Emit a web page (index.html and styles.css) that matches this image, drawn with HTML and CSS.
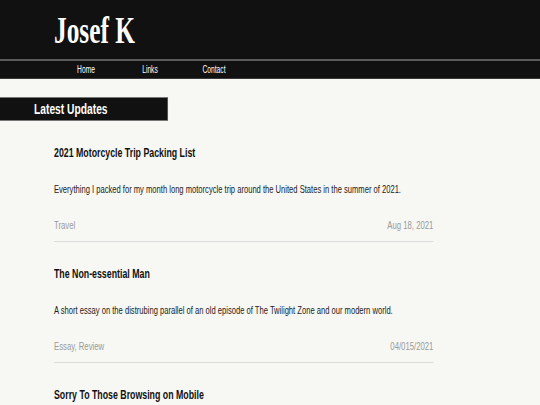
FILE: index.html
```html
<!DOCTYPE html>
<html lang="en">
<head>
<meta charset="utf-8">
<title>Josef K</title>
<link rel="stylesheet" href="styles.css">
</head>
<body>
<div class="viewport">
<div class="page">
  <header class="masthead">
    <h1 class="site-title">Josef K</h1>
  </header>
  <nav class="nav">
    <ul class="nav-list">
      <li class="nav-item"><a href="#">Home</a></li>
      <li class="nav-item"><a href="#">Links</a></li>
      <li class="nav-item"><a href="#">Contact</a></li>
    </ul>
  </nav>
  <main class="content">
    <h2 class="section-title">Latest Updates</h2>
    <div class="posts">
      <article class="post">
        <h3 class="post-title">2021 Motorcycle Trip Packing List</h3>
        <p class="post-desc">Everything I packed for my month long motorcycle trip around the United States in the summer of 2021.</p>
        <div class="post-meta"><span>Travel</span><span>Aug 18, 2021</span></div>
      </article>
      <article class="post">
        <h3 class="post-title">The Non-essential Man</h3>
        <p class="post-desc">A short essay on the distrubing parallel of an old episode of The Twilight Zone and our modern world.</p>
        <div class="post-meta"><span>Essay, Review</span><span>04/015/2021</span></div>
      </article>
      <article class="post">
        <h3 class="post-title">Sorry To Those Browsing on Mobile</h3>
      </article>
    </div>
  </main>
</div>
</div>
</body>
</html>
```
FILE: styles.css
```css
html, body {
  margin: 0;
  padding: 0;
  overflow: hidden;
  background: #f7f7f3;
}
.viewport {
  width: 540px;
  height: 405px;
  overflow: hidden;
}
.page {
  width: 810px;
  height: 405px;
  overflow: hidden;
  transform: scaleX(0.6667);
  transform-origin: 0 0;
  font-family: "Liberation Sans", Arial, sans-serif;
  background: #f7f7f3;
}
.masthead {
  background: #111111;
  height: 59px;
  padding-left: 81px;
  box-sizing: border-box;
  padding-top: 8px;
}
.site-title {
  margin: 0;
  font-family: "Liberation Serif", "Times New Roman", serif;
  font-weight: bold;
  font-size: 38px;
  line-height: 44px;
  color: #ffffff;
}
.nav {
  background: #111111;
  border-top: 2px solid #5a5a5a;
  border-bottom: 1px solid #3a3a3a;
}
.nav-list {
  list-style: none;
  margin: 0;
  padding: 0 0 0 81px;
  display: flex;
}
.nav-item {
  width: 96px;
  text-align: center;
  font-size: 10px;
  line-height: 17px;
}
.nav-item a {
  color: #ffffff;
  text-decoration: none;
}
.content {
  padding-top: 18px;
}
.section-title {
  margin: 0;
  width: 252px;
  box-sizing: border-box;
  background: #111111;
  color: #ffffff;
  font-size: 15.4px;
  font-weight: bold;
  line-height: 22px;
  padding-left: 51px;
  border: 1px solid #777777;
  border-left: none;
}
.posts {
  margin: 24px 0 0 81px;
  width: 569px;
}
.post {
  border-bottom: 1px solid #dcdcdc;
  margin-bottom: 24px;
  padding-bottom: 9px;
}
.post-title {
  margin: 0 0 21px;
  font-size: 13.2px;
  line-height: 16px;
  font-weight: bold;
  color: #111111;
}
.post-desc {
  margin: 0 0 20px;
  font-size: 11.4px;
  line-height: 15px;
  color: #222222;
}
.post-meta {
  display: flex;
  justify-content: space-between;
  font-size: 11.6px;
  line-height: 15px;
  color: #9a9a9a;
}
```
